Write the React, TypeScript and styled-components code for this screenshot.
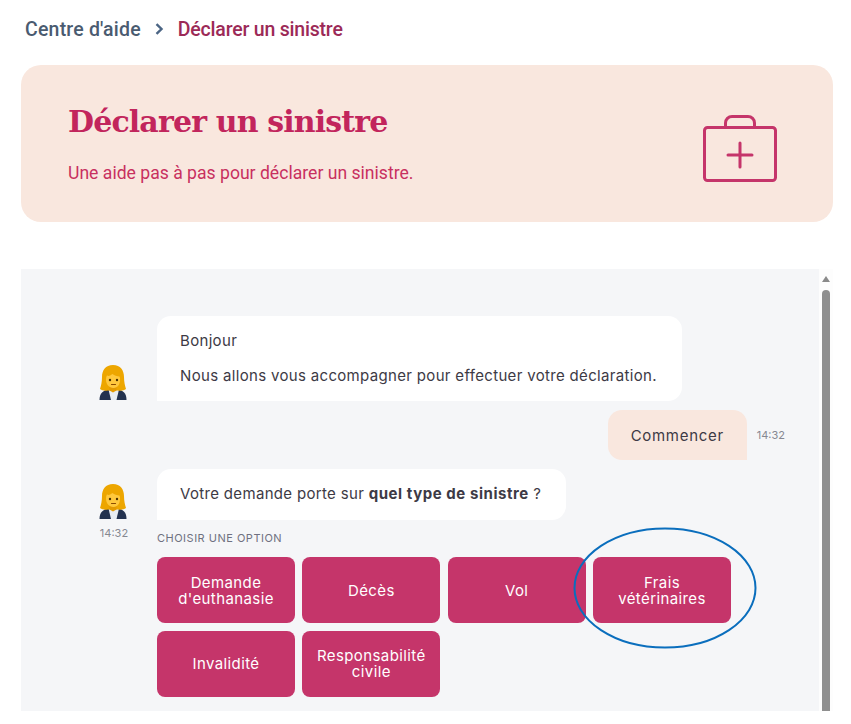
import React from 'react';
import styled, { createGlobalStyle } from 'styled-components';

const COLOR_PINK = '#c5356a';
const COLOR_TITLE = '#c2255c';
const COLOR_PEACH = '#f9e7de';
const COLOR_PANEL = '#f5f6f8';
const COLOR_TEXT = '#3d3a45';
const BODY_FONT = '"Inter", "Liberation Sans", sans-serif';

const GlobalStyle = createGlobalStyle`
  html, body {
    margin: 0;
    background: #fff;
    font-family: ${BODY_FONT};
  }
`;

const Page = styled.div`
  box-sizing: border-box;
  width: 851px;
  height: 724px;
  padding: 17px 18px 13px 21px;
  display: flex;
  flex-direction: column;
  overflow: hidden;
`;

const Breadcrumb = styled.nav`
  display: flex;
  align-items: center;
  height: 24px;
  padding-left: 4px;
  font-family: "Roboto", sans-serif;
  font-weight: 500;
  font-size: 19.5px;
  gap: 14px;
`;

const CrumbLink = styled.span`
  color: #4a5b70;
  letter-spacing: 0.2px;
`;

const CrumbCurrent = styled.span`
  color: #9c2a57;
  letter-spacing: -0.2px;
`;

const Hero = styled.section`
  margin-top: 24px;
  height: 157px;
  box-sizing: border-box;
  padding: 0 56px 0 47px;
  border-radius: 20px;
  background: ${COLOR_PEACH};
  display: flex;
  align-items: center;
  justify-content: space-between;
`;

const HeroTitle = styled.h1`
  margin: 0;
  font-family: "DejaVu Serif", serif;
  font-weight: 700;
  font-size: 30px;
  line-height: 40px;
  letter-spacing: -0.85px;
  color: ${COLOR_TITLE};
`;

const HeroText = styled.p`
  margin: 19px 0 0;
  font-family: "Roboto", sans-serif;
  font-size: 17.6px;
  line-height: 24px;
  color: #c8305f;
`;

const CaseIcon = styled.svg`
  width: 74px;
  height: 67px;
  margin-top: 10px;
  display: block;
`;

const ChatFrame = styled.div`
  margin-top: 47px;
  flex: 1;
  min-height: 0;
  display: flex;
`;

const ChatPanel = styled.div`
  position: relative;
  flex: 1;
  background: ${COLOR_PANEL};
  padding: 47px 34px 0 76px;
  display: flex;
  flex-direction: column;
  overflow: hidden;
`;

const ScrollTrack = styled.div`
  width: 14px;
  background: #fdfdfd;
  display: flex;
  flex-direction: column;
  align-items: center;
`;

const ScrollArrow = styled.div`
  margin-top: 7px;
  width: 0;
  height: 0;
  border-left: 4px solid transparent;
  border-right: 4px solid transparent;
  border-bottom: 6px solid #8a8a8a;
`;

const ScrollThumb = styled.div`
  margin-top: 8px;
  width: 8px;
  flex: 1;
  background: #8f8f8f;
  border-radius: 4px 4px 0 0;
`;

const BotGroup = styled.div`
  display: grid;
  grid-template-columns: 34px 1fr;
  column-gap: 26px;
`;

const Avatar = styled.svg`
  width: 34px;
  height: 37px;
  align-self: end;
  display: block;
`;

const Time = styled.span`
  font-size: 11px;
  line-height: 14px;
  color: #868891;
  white-space: nowrap;
`;

const AvatarTime = styled(Time)`
  margin-top: 6px;
  text-align: center;
`;

const Bubble = styled.div`
  justify-self: start;
  box-sizing: border-box;
  min-height: 51px;
  background: #fff;
  border-radius: 14px 14px 14px 0;
  padding: 15px 25px 15px 23px;
  font-size: 15px;
  line-height: 20px;
  letter-spacing: 0.33px;
  color: ${COLOR_TEXT};

  strong {
    letter-spacing: 0.55px;
  }
`;

const BubbleLine = styled.p<{ $gap?: number }>`
  margin: ${(p) => p.$gap ?? 0}px 0 0;
`;

const UserRow = styled.div`
  margin-top: 9px;
  margin-bottom: 9px;
  display: flex;
  justify-content: flex-end;
  align-items: center;
  gap: 10px;
`;

const UserBubble = styled.div`
  box-sizing: border-box;
  width: 139px;
  height: 50px;
  background: ${COLOR_PEACH};
  border-radius: 14px 14px 0 14px;
  display: flex;
  align-items: center;
  justify-content: center;
  font-size: 15px;
  letter-spacing: 0.7px;
  color: ${COLOR_TEXT};
`;

const Options = styled.div`
  padding-top: 11px;
`;

const OptionsLabel = styled.div`
  font-size: 11px;
  line-height: 14px;
  color: #6f7180;
  text-transform: uppercase;
  letter-spacing: 0.5px;
`;

const OptionsGrid = styled.div`
  margin-top: 12px;
  display: grid;
  grid-template-columns: repeat(4, 138px);
  grid-auto-rows: 66px;
  column-gap: 7.33px;
  row-gap: 7.5px;
`;

const OptionButton = styled.button`
  border: 0;
  border-radius: 8px;
  background: ${COLOR_PINK};
  color: #fff;
  font-family: ${BODY_FONT};
  font-size: 15px;
  line-height: 16px;
  letter-spacing: 0.4px;
  padding: 1px 12px 0;
  text-align: center;
`;

const Highlight = styled.svg`
  position: absolute;
  left: 552px;
  top: 258px;
  width: 184px;
  height: 122px;
  overflow: visible;
  pointer-events: none;
`;

const MedicalCase = () => (
  <CaseIcon viewBox="0 0 74 67" fill="none" stroke={COLOR_PINK} strokeWidth="3" strokeLinecap="round" strokeLinejoin="round">
    <rect x="1.5" y="12.5" width="71" height="53" rx="3" />
    <path d="M22.5 12.5V8a6.5 6.5 0 0 1 6.5-6.5h16a6.5 6.5 0 0 1 6.5 6.5v4.5" />
    <path d="M37 28v24M25 40h24" />
  </CaseIcon>
);

const WomanEmoji = () => (
  <Avatar viewBox="0 0 34 37">
    <path d="M2.5 36c0-7 4-9.500 8.500-10.500h10c5 1 8.500 3.500 8.500 10.500z" fill="#23324f" />
    <path d="M11.500 25.500l2.500 10.500h5.500l2.500-10.500z" fill="#e8edf3" />
    <path d="M16 1C8.500 1 5 6.500 5 13c0 5-1 9-2 12 2 1.500 5 2 8 1.500h10c3 .5 6 0 8-1.500-1-3-2-7-2-12C27 6.500 23.500 1 16 1z" fill="#eda600" />
    <path d="M12.500 21h7v5.500l-3.500 2-3.500-2z" fill="#e39a00" />
    <path d="M16.500 24c-4.500 0-7.500-3.800-7.500-8.500 0-1.500.3-3 1-4.200 1.500 1.600 3 .2 5.500-1.300 1.800 1.700 4.500 2.300 7 2.400.5 1 .5 2 .5 3.100 0 4.700-2 8.500-6.500 8.500z" fill="#ffc83d" />
    <circle cx="13" cy="16" r="1.200" fill="#4a3000" />
    <circle cx="20" cy="16" r="1.200" fill="#4a3000" />
    <path d="M14.500 20.500h4" stroke="#8a4a00" strokeWidth="1.100" strokeLinecap="round" />
  </Avatar>
);

const OPTIONS = ["Demande d'euthanasie", 'Décès', 'Vol', 'Frais vétérinaires', 'Invalidité', 'Responsabilité civile'];

const App = () => (
  <Page>
    <GlobalStyle />
    <Breadcrumb>
      <CrumbLink>Centre d'aide</CrumbLink>
      <svg width="9" height="12" viewBox="0 0 9 12" fill="none" stroke="#4b6584" strokeWidth="2.4">
        <path d="M1.500 1.200L6.500 6l-5 4.800" />
      </svg>
      <CrumbCurrent>Déclarer un sinistre</CrumbCurrent>
    </Breadcrumb>

    <Hero>
      <div>
        <HeroTitle>Déclarer un sinistre</HeroTitle>
        <HeroText>Une aide pas à pas pour déclarer un sinistre.</HeroText>
      </div>
      <MedicalCase />
    </Hero>

    <ChatFrame>
      <ChatPanel>
        <BotGroup>
          <WomanEmoji />
          <Bubble>
            <BubbleLine>Bonjour</BubbleLine>
            <BubbleLine $gap={15}>Nous allons vous accompagner pour effectuer votre déclaration.</BubbleLine>
          </Bubble>
        </BotGroup>

        <UserRow>
          <UserBubble>Commencer</UserBubble>
          <Time>14:32</Time>
        </UserRow>

        <BotGroup>
          <WomanEmoji />
          <Bubble>
            Votre demande porte sur <strong>quel type de sinistre</strong> ?
          </Bubble>
          <AvatarTime>14:32</AvatarTime>
          <Options>
            <OptionsLabel>Choisir une option</OptionsLabel>
            <OptionsGrid>
              {OPTIONS.map((o) => (
                <OptionButton key={o}>{o}</OptionButton>
              ))}
            </OptionsGrid>
          </Options>
        </BotGroup>

        <Highlight viewBox="0 0 184 122" fill="none">
          <ellipse cx="92" cy="61" rx="90.500" ry="59.500" stroke="#0a6ebd" strokeWidth="2" />
        </Highlight>
      </ChatPanel>
      <ScrollTrack>
        <ScrollArrow />
        <ScrollThumb />
      </ScrollTrack>
    </ChatFrame>
  </Page>
);

export default App;
